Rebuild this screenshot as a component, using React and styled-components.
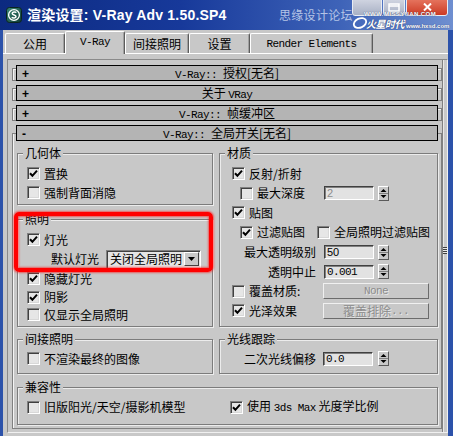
import React from 'react'
import styled, { createGlobalStyle } from 'styled-components'

const GlobalStyle = createGlobalStyle`
  html, body {
    margin: 0;
    padding: 0;
    background: #c8c8c8;
  }
  body {
    font-family: "Noto Sans CJK SC", "DejaVu Sans", sans-serif;
    font-size: 12px;
    line-height: 14px;
    color: #000;
  }
`;

const Window = styled.div`
    width: 453px;
    height: 436px;
    display: flex;
    flex-direction: column;
    overflow: hidden;
    background: #c8c8c8;
`;

// title bar
const TitleBar = styled.div`
    position: relative;
    flex: none;
    height: 30px;
    display: flex;
    align-items: center;
    gap: 5px;
    padding-left: 6px;
    background: linear-gradient(90deg, #0c2a80 0%, #17399a 40%, #3e63b8 75%, #6f8fd0 100%);
`;

const TitleText = styled.div`
    font-family: "Liberation Sans", "Noto Sans CJK SC", sans-serif;
    font-weight: bold;
    font-size: 14px;
    color: #fff;
    letter-spacing: 0.2px;
`;

const Watermark = styled.div`
    position: absolute;
    left: 279px;
    top: 8px;
    font-size: 12px;
    color: #b4c4e6;
    letter-spacing: 0.3px;
`;

const WinButtons = styled.div`
    position: absolute;
    top: -3px;
    left: 352px;
    display: flex;
    gap: 1px;
`;

const WinButton = styled.div`
    width: ${({ $w }) => $w}px;
    height: 19px;
    box-sizing: border-box;
    border: 1px solid #e8ecf4;
    border-radius: 3px;
    display: flex;
    align-items: flex-start;
    justify-content: center;
    padding-top: 5px;
    background: ${({ $red }) => $red
        ? 'linear-gradient(180deg, #e87a64 0%, #cc3a24 100%)'
        : 'linear-gradient(180deg, #d4d8e4 0%, #a8b0c4 100%)'};
`;

const Logo = styled.div`
    position: absolute;
    left: 352px;
    top: 10px;
    width: 96px;
    height: 20px;
`;

const LogoSite = styled.div`
    position: absolute;
    left: ${({ $x }) => $x}px;
    top: ${({ $y }) => $y}px;
    font-family: "Liberation Sans", sans-serif;
    font-size: ${({ $s }) => $s}px;
    line-height: ${({ $s }) => $s}px;
    font-weight: bold;
    color: #fff;
    text-shadow: 0 0 1px #203060;
    letter-spacing: ${({ $ls }) => $ls || 0}px;
    white-space: nowrap;
`;

const LogoMark = styled.div`
    position: absolute;
    left: 14px;
    top: 8px;
    font-size: 10px;
    line-height: 11px;
    font-weight: bold;
    font-style: italic;
    color: #fff;
    letter-spacing: -0.5px;
    text-shadow: 0 0 1px #1a2850;
    white-space: nowrap;
`;

// body and tabs
const Body = styled.div`
    flex: 1;
    min-height: 0;
    display: flex;
    flex-direction: column;
    border-left: 3px solid #2c52aa;
    border-right: 5px solid #2c52aa;
`;

const TabRow = styled.div`
    position: relative;
    z-index: 1;
    flex: none;
    height: 23px;
    display: flex;
    align-items: flex-end;
    padding-left: 2px;
`;

const Tab = styled.div`
    width: ${({ $w }) => $w}px;
    height: ${({ $active }) => ($active ? 23 : 20)}px;
    margin-bottom: ${({ $active }) => ($active ? -1 : 0)}px;
    padding-bottom: ${({ $active }) => ($active ? 2 : 0)}px;
    box-sizing: border-box;
    display: flex;
    align-items: center;
    justify-content: center;
    background: #c8c8c8;
    border-top: 1px solid #fff;
    border-left: 1px solid #fff;
    border-right: 1px solid #5c5c5c;
    box-shadow: inset -1px 0 #a0a0a0;
    border-radius: 2px 2px 0 0;
`;

const Mono = styled.span`
    font-family: "Liberation Mono", monospace;
    font-size: 11px;
    letter-spacing: -0.6px;
    color: ${({ $muted }) => ($muted ? '#8c8c8c' : 'inherit')};
`;

const TabPanel = styled.div`
    flex: 1;
    min-height: 0;
    display: flex;
    border-top: 1px solid #fff;
    padding: 5px 1px 3px 4px;
`;

const Sunken = styled.div`
    flex: 1;
    display: flex;
    border: 1px solid;
    border-color: #8a8a8a #f0f0f0 #f0f0f0 #8a8a8a;
`;

const RolloutArea = styled.div`
    width: 430px;
    display: flex;
    flex-direction: column;
    gap: 7px;
    padding: 8px 0 0 4px;
`;

const ScrollTrack = styled.div`
    width: 4px;
    border-left: 1px solid #808080;
    box-shadow: inset 1px 0 #e8e8e8;
    display: flex;
    flex-direction: column;
    align-items: center;
`;

const Grip = styled.div`
    margin-top: 187px;
    width: 4px;
    height: 7px;
    background: repeating-linear-gradient(180deg, #404040 0 1px, #e8e8e8 1px 2px);
`;

// rollouts
const Bracket = styled.div`
    height: 13px;
    box-sizing: border-box;
    border: 1px solid #808080;
    box-shadow: inset 1px 1px #f4f4f4;
    padding: 0 3px;
`;

const OpenFrame = styled.div`
    margin-top: 5px;
    border: 1px solid #808080;
    box-shadow: inset 1px 0 #f4f4f4;
    padding: 0 3px;
`;

const Bar = styled.div`
    position: relative;
    margin-top: ${({ $lift }) => -$lift}px;
    height: 16px;
    box-sizing: border-box;
    border: 1px solid #000;
    background: #b4b4b4;
    display: grid;
    grid-template-columns: 18px 1fr 18px;
    align-items: center;
`;

const Sign = styled.span`
    padding-left: 5px;
    font-family: "Liberation Sans", sans-serif;
    font-weight: bold;
    font-size: 12px;
    line-height: 12px;
`;

const BarTitle = styled.span`
    text-align: center;
    white-space: nowrap;
`;

const Content = styled.div`
    display: grid;
    grid-template-columns: 196px 219px;
    column-gap: 6px;
    row-gap: 5px;
    padding: 5px 2px 3px 1px;
`;

const Column = styled.div`
    display: flex;
    flex-direction: column;
    gap: 7px;
`;

const GroupWrap = styled.div`
    position: relative;
    display: flex;
    flex-direction: column;
    grid-column: ${({ $span }) => ($span ? '1 / 3' : 'auto')};
    margin-top: ${({ $mt }) => $mt || 0}px;
`;

const Legend = styled.div`
    position: relative;
    z-index: 1;
    align-self: flex-start;
    height: 14px;
    margin-left: 6px;
    padding: 0 2px;
    background: #c8c8c8;
`;

const GroupBox = styled.div`
    flex: 1;
    margin-top: -7px;
    border: 1px solid #7c7c7c;
    box-shadow: 1px 1px #ececec, inset 1px 1px #ececec;
    padding: 10px 0 ${({ $pb }) => $pb ?? 2}px ${({ $pl }) => $pl ?? 9}px;
`;

const Row = styled.div`
    display: flex;
    align-items: center;
    height: ${({ $h }) => $h || 19}px;
    padding-left: ${({ $indent }) => $indent || 0}px;
`;

const Cell = styled.div`
    display: flex;
    align-items: center;
    width: ${({ $w }) => ($w ? `${$w}px` : 'auto')};
    margin-left: ${({ $ml }) => $ml || 0}px;
`;

const Label = styled.span`
    margin-left: 4px;
    white-space: nowrap;
    width: ${({ $w }) => ($w ? `${$w}px` : 'auto')};
`;

const RightLabel = styled.span`
    width: ${({ $w }) => $w}px;
    margin-right: ${({ $gap }) => $gap}px;
    text-align: right;
    white-space: nowrap;
`;

const CheckBox = styled.div`
    flex: none;
    width: 13px;
    height: 13px;
    box-sizing: border-box;
    border: 1px solid;
    border-color: #808080 #fff #fff #808080;
    box-shadow: inset 1px 1px #404040, inset -1px -1px #d8d8d8;
    background: #e6e6e6;
    display: flex;
    align-items: center;
    justify-content: center;
`;

const Check = ({ on }) => (
    <CheckBox>
        {on && (
            <svg width="9" height="9" viewBox="0 0 9 9">
                <path d="M1 4.2 L3.4 6.8 L8 1.6" stroke="#000" strokeWidth="2" fill="none" />
            </svg>
        )}
    </CheckBox>
);

const Field = styled.div`
    width: 50px;
    height: 14px;
    box-sizing: border-box;
    border: 1px solid;
    border-color: #404040 #fff #fff #404040;
    box-shadow: inset 1px 1px #808080;
    background: #e2e2e2;
    padding-left: 2px;
    display: flex;
    align-items: center;
    font-family: "Liberation Sans", sans-serif;
    font-size: 11px;
    color: ${({ $muted }) => ($muted ? '#8c8c8c' : '#000')};
`;

const Arrows = styled.div`
    width: 11px;
    height: 15px;
    margin-left: ${({ $gap }) => $gap ?? 4}px;
    box-sizing: border-box;
    border: 1px solid;
    border-color: #fff #5a5a5a #5a5a5a #fff;
    background: #c8c8c8;
    display: flex;
`;

const Spinner = ({ value, muted, gap }) => (
    <>
        <Field $muted={muted}>{value}</Field>
        <Arrows $gap={gap}>
            <svg width="9" height="13" viewBox="0 0 9 13">
                <path d="M4.5 2 L7.5 5 L1.5 5 Z" fill="#000" />
                <path d="M0 6.5 H9" stroke="#808080" strokeWidth="1" />
                <path d="M1.5 8 L7.5 8 L4.5 11 Z" fill="#000" />
            </svg>
        </Arrows>
    </>
);

const Select = styled.div`
    margin-left: 7px;
    width: 95px;
    height: 19px;
    box-sizing: border-box;
    border: 1px solid;
    border-color: #808080 #fff #fff #808080;
    box-shadow: inset 1px 1px #404040;
    background: #e4e4e4;
    display: flex;
    align-items: center;
    justify-content: space-between;
    padding: 0 1px 0 3px;
`;

const SelectButton = styled.div`
    width: 15px;
    height: 14px;
    box-sizing: border-box;
    border: 1px solid;
    border-color: #fff #404040 #404040 #fff;
    background: #c8c8c8;
    display: flex;
    align-items: center;
    justify-content: center;
`;

const GhostButton = styled.div`
    width: 106px;
    height: 16px;
    box-sizing: border-box;
    border: 1px solid;
    border-color: #f0f0f0 #6c6c6c #6c6c6c #f0f0f0;
    display: flex;
    align-items: center;
    justify-content: center;
    color: #8c8c8c;
    text-shadow: 1px 1px #e6e6e6;
`;

const Highlight = styled.div`
    position: absolute;
    left: -3px;
    top: 0px;
    width: 199px;
    height: 60px;
    box-sizing: border-box;
    border: 4px solid #ff0000;
    border-radius: 5px;
    box-shadow: 0 0 2px 1px rgba(255, 20, 20, 0.6), inset 0 0 2px 1px rgba(255, 20, 20, 0.6);
    pointer-events: none;
    z-index: 2;
`;

const tabs = [
    { label: '公用', w: 60 },
    { label: <Mono>V-Ray</Mono>, w: 60, active: true },
    { label: '间接照明', w: 64 },
    { label: '设置', w: 61 },
    { label: <Mono>Render Elements</Mono>, w: 123 },
];

const rollouts = [
    <><Mono>V-Ray:: </Mono>授权[无名]</>,
    <>关于 <Mono>VRay</Mono></>,
    <><Mono>V-Ray:: </Mono>帧缓冲区</>,
];

const Group = ({ title, children, span, mt, pl, pb, extra }) => (
    <GroupWrap $span={span} $mt={mt}>
        {extra}
        <Legend>{title}</Legend>
        <GroupBox $pl={pl} $pb={pb}>{children}</GroupBox>
    </GroupWrap>
);

const App = () => {
    return (
        <Window>
            <GlobalStyle />
            <TitleBar>
                <svg width="16" height="16" viewBox="0 0 16 16">
                    <defs>
                        <linearGradient id="ic" x1="0" y1="0" x2="1" y2="1">
                            <stop offset="0" stopColor="#3c8a78" />
                            <stop offset="1" stopColor="#0e3a32" />
                        </linearGradient>
                    </defs>
                    <rect x="0.5" y="0.5" width="15" height="15" rx="3" fill="url(#ic)" stroke="#0a2420" />
                    <circle cx="8" cy="8" r="5.4" fill="none" stroke="#fff" strokeWidth="1.3" />
                    <path d="M10.3 5.6 C9.5 4.6 6.2 4.6 6.2 6.6 C6.2 8.4 10 7.6 10 9.5 C10 11.3 6.8 11.4 5.8 10.3" fill="none" stroke="#fff" strokeWidth="1.5" />
                </svg>
                <TitleText>渲染设置: V-Ray Adv 1.50.SP4</TitleText>
                <Watermark>思缘设计论坛</Watermark>
                <WinButtons>
                    <WinButton $w={30} />
                    <WinButton $w={22}>
                        <svg width="12" height="9" viewBox="0 0 12 9">
                            <rect x="1" y="1" width="10" height="7" fill="none" stroke="#fff" strokeWidth="1.5" />
                            <path d="M1 3 H11" stroke="#fff" strokeWidth="1.5" />
                        </svg>
                    </WinButton>
                    <WinButton $w={42} $red>
                        <svg width="9" height="8" viewBox="0 0 9 8">
                            <path d="M1 0.5 L8 7.5 M8 0.5 L1 7.5" stroke="#fff" strokeWidth="2" />
                        </svg>
                    </WinButton>
                </WinButtons>
                <Logo>
                    <svg width="16" height="14" viewBox="0 0 16 14" style={{ position: 'absolute', left: 0, top: 6 }}>
                        <ellipse cx="8" cy="7" rx="6.5" ry="4.5" fill="none" stroke="#fff" strokeWidth="1.8" transform="rotate(-25 8 7)" />
                    </svg>
                    <LogoSite $x={12} $y={1} $s={6} $ls={0.4}>WWW.MISSYUAN.COM</LogoSite>
                    <LogoMark>火星时代</LogoMark>
                    <LogoSite $x={54} $y={13} $s={6}>www.hxsd.com</LogoSite>
                </Logo>
            </TitleBar>

            <Body>
                <TabRow>
                    {tabs.map((t, i) => (
                        <Tab key={i} $w={t.w} $active={t.active}>{t.label}</Tab>
                    ))}
                </TabRow>
                <TabPanel>
                    <Sunken>
                        <RolloutArea>
                            {rollouts.map((title, i) => (
                                <Bracket key={i}>
                                    <Bar $lift={4}>
                                        <Sign>+</Sign>
                                        <BarTitle>{title}</BarTitle>
                                    </Bar>
                                </Bracket>
                            ))}
                            <OpenFrame>
                                <Bar $lift={9}>
                                    <Sign>-</Sign>
                                    <BarTitle><Mono>V-Ray:: </Mono>全局开关[无名]</BarTitle>
                                </Bar>
                                <Content>
                                    <Column>
                                        <Group title="几何体">
                                            <Row><Check on /><Label>置换</Label></Row>
                                            <Row><Check /><Label>强制背面消隐</Label></Row>
                                        </Group>
                                        <Group title="照明" pb={3} extra={<Highlight />}>
                                            <Row><Check on /><Label>灯光</Label></Row>
                                            <Row $h={20} $indent={20}>
                                                <Label>默认灯光</Label>
                                                <Select>
                                                    <span>关闭全局照明</span>
                                                    <SelectButton>
                                                        <svg width="7" height="4" viewBox="0 0 7 4">
                                                            <path d="M0 0 H7 L3.5 4 Z" fill="#000" />
                                                        </svg>
                                                    </SelectButton>
                                                </Select>
                                            </Row>
                                            <Row><Check on /><Label>隐藏灯光</Label></Row>
                                            <Row $h={18}><Check on /><Label>阴影</Label></Row>
                                            <Row $h={17}><Check /><Label>仅显示全局照明</Label></Row>
                                        </Group>
                                    </Column>

                                    <Group title="材质" pl={12}>
                                        <Row><Check on /><Label>反射/折射</Label></Row>
                                        <Row $h={20} $indent={8}>
                                            <Check /><Label $w={67}>最大深度</Label>
                                            <Spinner value="2" muted />
                                        </Row>
                                        <Row><Check on /><Label>贴图</Label></Row>
                                        <Row $h={20} $indent={8}>
                                            <Check on /><Label>过滤贴图</Label>
                                            <Cell $ml={12}><Check /><Label>全局照明过滤贴图</Label></Cell>
                                        </Row>
                                        <Row $h={20}>
                                            <RightLabel $w={84} $gap={8}>最大透明级别</RightLabel>
                                            <Spinner value="50" />
                                        </Row>
                                        <Row>
                                            <RightLabel $w={84} $gap={8}>透明中止</RightLabel>
                                            <Spinner value={<Mono>0.001</Mono>} />
                                        </Row>
                                        <Row $h={20}>
                                            <Check /><Label $w={74}>覆盖材质:</Label>
                                            <GhostButton><Mono $muted>None</Mono></GhostButton>
                                        </Row>
                                        <Row><Check on /><Label $w={74}>光泽效果</Label>
                                            <GhostButton>覆盖排除<Mono $muted>...</Mono></GhostButton>
                                        </Row>
                                    </Group>

                                    <Group title="间接照明" pb={6}>
                                        <Row $h={17}><Check /><Label>不渲染最终的图像</Label></Row>
                                    </Group>
                                    <Group title="光线跟踪" pl={12} pb={6}>
                                        <Row $h={17}>
                                            <RightLabel $w={84} $gap={7}>二次光线偏移</RightLabel>
                                            <Spinner value={<Mono>0.0</Mono>} gap={5} />
                                        </Row>
                                    </Group>

                                    <Group title="兼容性" span mt={1} pb={8}>
                                        <Row $h={18}>
                                            <Cell $w={203}><Check /><Label>旧版阳光/天空/摄影机模型</Label></Cell>
                                            <Check on /><Label>使用 <Mono>3ds Max</Mono> 光度学比例</Label>
                                        </Row>
                                    </Group>
                                </Content>
                            </OpenFrame>
                        </RolloutArea>
                        <ScrollTrack><Grip /></ScrollTrack>
                    </Sunken>
                </TabPanel>
            </Body>
        </Window>
    )
}

export default App;
